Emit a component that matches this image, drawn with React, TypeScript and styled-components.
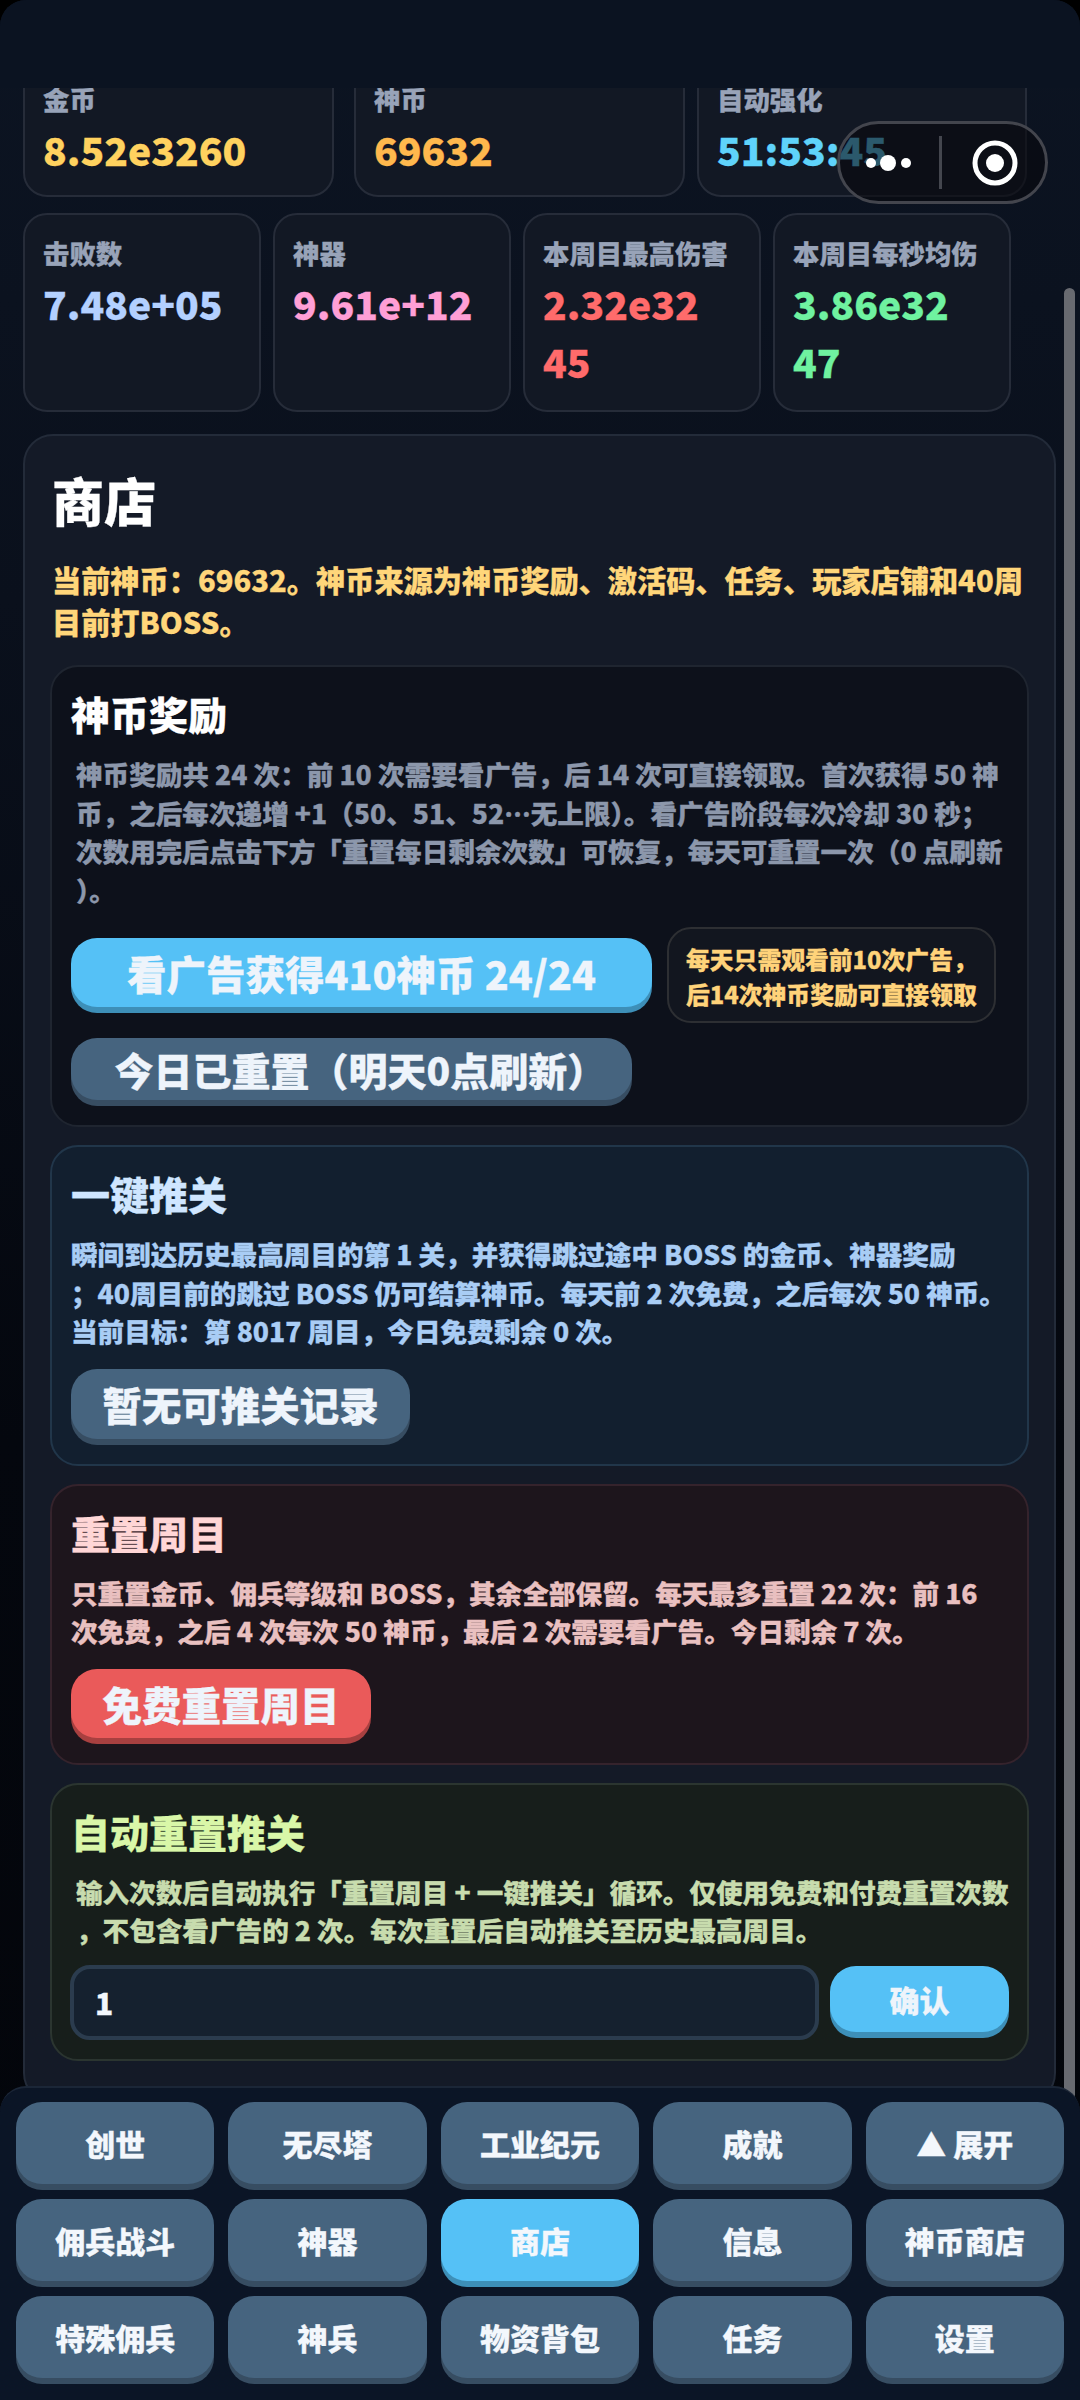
import * as React from 'react'
import styled, { createGlobalStyle } from 'styled-components'

const GlobalStyle = createGlobalStyle`
  html, body {
    margin: 0;
    padding: 0;
    background: #000;
  }
  * {
    box-sizing: border-box;
  }
`

const Screen = styled.div`
  position: relative;
  width: 1080px;
  height: 2400px;
  overflow: hidden;
  display: flex;
  flex-direction: column;
  border-radius: 26px 26px 0 0;
  background: linear-gradient(180deg, #0c1422 0%, #0a101c 25%, #04070e 60%, #03050a 100%);
  font-family: 'Noto Sans CJK SC', 'Noto Sans', sans-serif;
  font-weight: 900;
  -webkit-text-stroke: 0.3px currentColor;
`

const Header = styled.div`
  flex: none;
  position: relative;
  z-index: 2;
  height: 88px;
  background: #0b1321;
`

const Scroller = styled.div`
  flex: 1;
  min-height: 0;
  overflow: hidden;
  padding: 0 24px 0 23px;
`

const TopStats = styled.div`
  display: flex;
  gap: 12px;
  margin-top: -29px;
`

const Stats = styled.div`
  display: grid;
  grid-template-columns: repeat(4, 238px);
  gap: 12px;
  margin-top: 16px;
`

const StatCard = styled.div<{ $width?: number; $gapAfter?: number; $height: number }>`
  flex: none;
  width: ${p => (p.$width ? `${p.$width}px` : 'auto')};
  height: ${p => p.$height}px;
  margin-right: ${p => p.$gapAfter ?? 0}px;
  padding: 19px 18px;
  background: #121824;
  border: 2px solid #262c39;
  border-radius: 24px;
`

const StatLabel = styled.div`
  font-size: 26.4px;
  line-height: 38px;
  color: #98a3b8;
  white-space: nowrap;
`

const StatValue = styled.div<{ $color: string }>`
  margin-top: 2px;
  font-size: 39px;
  line-height: 58px;
  color: ${p => p.$color};
`

const Panel = styled.div`
  margin-top: 22px;
  padding: 28px 25px 40px;
  background: #141a27;
  border: 2px solid #232b39;
  border-radius: 30px;
`

const PanelTitle = styled.h1`
  margin: 0 0 0 2px;
  font-size: 52px;
  font-weight: 900;
  line-height: 72px;
  color: #fff;
`

const CoinLine = styled.div`
  margin: 22px 0 0 2px;
  font-size: 29.2px;
  line-height: 42px;
  color: #ffd67a;
  white-space: nowrap;
`

const Section = styled.div<{ $bg: string; $border: string; $first?: boolean }>`
  margin-top: ${p => (p.$first ? 23 : 18)}px;
  padding: 20px 19px 19px;
  background: ${p => p.$bg};
  border: 2px solid ${p => p.$border};
  border-radius: 28px;
`

const SectionTitle = styled.h2<{ $color: string }>`
  margin: 0;
  font-size: 39px;
  font-weight: 900;
  line-height: 52px;
  color: ${p => p.$color};
`

const Desc = styled.p<{ $color: string; $inset?: boolean }>`
  margin: 16px 0 0;
  padding-left: ${p => (p.$inset ? 5 : 0)}px;
  font-size: 26.6px;
  line-height: 38.5px;
  color: ${p => p.$color};
  white-space: nowrap;
`

const AdRow = styled.div`
  display: flex;
  align-items: center;
  gap: 15px;
  margin-top: 18px;
`

const ActionButton = styled.button<{
  $bg: string
  $shadow: string
  $width: number
  $height: number
  $size: number
  $indent?: number
}>`
  flex: none;
  display: block;
  width: ${p => p.$width}px;
  height: ${p => p.$height - 6}px;
  margin: 0 0 6px;
  padding: 0;
  border: none;
  border-radius: 26px;
  background: ${p => p.$bg};
  box-shadow: 0 6px 0 ${p => p.$shadow};
  color: #eef4fb;
  font-family: inherit;
  font-weight: 900;
  font-size: ${p => p.$size}px;
  text-indent: ${p => p.$indent ?? 0}px;
  white-space: nowrap;
`

const Note = styled.div`
  width: 329px;
  height: 96px;
  padding: 12px 17px;
  background: #12161f;
  border: 2px solid #2d2f33;
  border-radius: 24px;
  font-size: 23.8px;
  line-height: 35px;
  color: #ffd37a;
  white-space: nowrap;
`

const ResetRow = styled.div`
  margin-top: 15px;
`

const ButtonRow = styled.div`
  margin-top: 18px;
`

const InputRow = styled.div`
  display: flex;
  align-items: center;
  gap: 11px;
  margin-top: 15px;
  margin-left: -1px;
`

const CountInput = styled.input`
  flex: none;
  width: 749px;
  height: 75px;
  padding: 0 21px;
  background: #15212f;
  border: 4px solid #2b3c4e;
  border-radius: 20px;
  outline: none;
  color: #f3f7fc;
  font-family: inherit;
  font-weight: 900;
  font-size: 30px;
`

const Nav = styled.div`
  position: absolute;
  left: 0;
  right: 0;
  bottom: 0;
  z-index: 3;
  height: 314px;
  padding: 14px 16px 0;
  display: grid;
  grid-template-columns: repeat(5, 1fr);
  grid-auto-rows: 82px;
  column-gap: 14px;
  row-gap: 15px;
  background: #0b1526;
  border-top: 2px solid #1b2637;
  border-radius: 26px 26px 0 0;
`

const NavButton = styled.button<{ $active?: boolean }>`
  padding: 0;
  border: none;
  border-radius: 26px;
  background: ${p => (p.$active ? '#55c1f6' : '#46647f')};
  box-shadow: 0 6px 0 ${p => (p.$active ? '#3d8fb8' : '#374d62')};
  color: #f3f7fc;
  font-family: inherit;
  font-weight: 900;
  font-size: 30px;
  white-space: nowrap;
`

const ScrollThumb = styled.div`
  position: absolute;
  z-index: 1;
  left: 1064px;
  top: 288px;
  bottom: 300px;
  width: 11px;
  border-radius: 6px;
  background: #686a70;
`

const Capsule = styled.div`
  position: absolute;
  z-index: 4;
  left: 837px;
  top: 121px;
  width: 211px;
  height: 83px;
  display: flex;
  align-items: center;
  padding-left: 24px;
  background: rgba(8, 9, 14, 0.6);
  border: 3px solid #43454d;
  border-radius: 42px;
`

const Divider = styled.div`
  width: 3px;
  height: 53px;
  margin-left: 13px;
  background: #44464e;
`

const CoinLineText = () => (
  <CoinLine>
    当前神币：69632。神币来源为神币奖励、激活码、任务、玩家店铺和40周
    <br />
    目前打BOSS。
  </CoinLine>
)

const navItems = [
  '创世', '无尽塔', '工业纪元', '成就', '▲ 展开',
  '佣兵战斗', '神器', '商店', '信息', '神币商店',
  '特殊佣兵', '神兵', '物资背包', '任务', '设置',
]

const blueBtn = { $bg: '#55c1f6', $shadow: '#3d8fb8' }
const slateBtn = { $bg: '#46647f', $shadow: '#374d62' }

export default function App() {
  return (
    <>
      <GlobalStyle />
      <Screen>
        <Header />
        <Scroller>
          <TopStats>
            <StatCard $width={311} $gapAfter={8} $height={138}>
              <StatLabel>金币</StatLabel>
              <StatValue $color="#ffd25f">8.52e3260</StatValue>
            </StatCard>
            <StatCard $width={331} $height={138}>
              <StatLabel>神币</StatLabel>
              <StatValue $color="#ffb84d">69632</StatValue>
            </StatCard>
            <StatCard $width={330} $height={138}>
              <StatLabel>自动强化</StatLabel>
              <StatValue $color="#5fd3fb">51:53:45</StatValue>
            </StatCard>
          </TopStats>
          <Stats>
            <StatCard $height={199}>
              <StatLabel>击败数</StatLabel>
              <StatValue $color="#b3d0ff">7.48e+05</StatValue>
            </StatCard>
            <StatCard $height={199}>
              <StatLabel>神器</StatLabel>
              <StatValue $color="#ff9fd6">9.61e+12</StatValue>
            </StatCard>
            <StatCard $height={199}>
              <StatLabel>本周目最高伤害</StatLabel>
              <StatValue $color="#ff6b6b">
                2.32e32
                <br />
                45
              </StatValue>
            </StatCard>
            <StatCard $height={199}>
              <StatLabel>本周目每秒均伤</StatLabel>
              <StatValue $color="#6ff2a0">
                3.86e32
                <br />
                47
              </StatValue>
            </StatCard>
          </Stats>
          <Panel>
            <PanelTitle>商店</PanelTitle>
            <CoinLineText />
            <Section $first $bg="#0d111b" $border="#1f2530">
              <SectionTitle $color="#fff">神币奖励</SectionTitle>
              <Desc $color="#8c97ab" $inset>
                神币奖励共 24 次：前 10 次需要看广告，后 14 次可直接领取。首次获得 50 神
                <br />
                币，之后每次递增 +1（50、51、52…无上限）。看广告阶段每次冷却 30 秒；
                <br />
                次数用完后点击下方「重置每日剩余次数」可恢复，每天可重置一次（0 点刷新
                <br />）。
              </Desc>
              <AdRow>
                <ActionButton {...blueBtn} $width={581} $height={75} $size={39.5}>
                  看广告获得410神币 24/24
                </ActionButton>
                <Note>
                  每天只需观看前10次广告，
                  <br />
                  后14次神币奖励可直接领取
                </Note>
              </AdRow>
              <ResetRow>
                <ActionButton {...slateBtn} $width={561} $height={68} $size={39} $indent={18}>
                  今日已重置（明天0点刷新）
                </ActionButton>
              </ResetRow>
            </Section>
            <Section $bg="#121f2f" $border="#21364a">
              <SectionTitle $color="#cfe6ff">一键推关</SectionTitle>
              <Desc $color="#a9cdf5">
                瞬间到达历史最高周目的第 1 关，并获得跳过途中 BOSS 的金币、神器奖励
                <br />；40周目前的跳过 BOSS 仍可结算神币。每天前 2 次免费，之后每次 50 神币。
                <br />
                当前目标：第 8017 周目，今日免费剩余 0 次。
              </Desc>
              <ButtonRow>
                <ActionButton {...slateBtn} $width={339} $height={76} $size={39.5}>
                  暂无可推关记录
                </ActionButton>
              </ButtonRow>
            </Section>
            <Section $bg="#1d151c" $border="#35232c">
              <SectionTitle $color="#ffd6d6">重置周目</SectionTitle>
              <Desc $color="#e9c0c0">
                只重置金币、佣兵等级和 BOSS，其余全部保留。每天最多重置 22 次：前 16
                <br />
                次免费，之后 4 次每次 50 神币，最后 2 次需要看广告。今日剩余 7 次。
              </Desc>
              <ButtonRow>
                <ActionButton $bg="#ea5a5a" $shadow="#a84040" $width={300} $height={75} $size={39.5}>
                  免费重置周目
                </ActionButton>
              </ButtonRow>
            </Section>
            <Section $bg="#171e1b" $border="#2b3530">
              <SectionTitle $color="#d9f7a8">自动重置推关</SectionTitle>
              <Desc $color="#c8dcae" $inset>
                输入次数后自动执行「重置周目 + 一键推关」循环。仅使用免费和付费重置次数
                <br />，不包含看广告的 2 次。每次重置后自动推关至历史最高周目。
              </Desc>
              <InputRow>
                <CountInput defaultValue="1" />
                <ActionButton {...blueBtn} $width={179} $height={72} $size={30}>
                  确认
                </ActionButton>
              </InputRow>
            </Section>
          </Panel>
        </Scroller>
        <ScrollThumb />
        <Capsule>
          <svg width="62" height="24" viewBox="0 0 62 24">
            <circle cx="7" cy="12" r="5" fill="#fff" />
            <circle cx="24" cy="12" r="8" fill="#fff" />
            <circle cx="42" cy="12" r="5" fill="#fff" />
          </svg>
          <Divider />
          <svg width="48" height="48" viewBox="0 0 48 48" style={{ marginLeft: 29 }}>
            <circle cx="24" cy="24" r="20" fill="none" stroke="#fff" strokeWidth="5" />
            <circle cx="24" cy="24" r="9" fill="#fff" />
          </svg>
        </Capsule>
        <Nav>
          {navItems.map(item => (
            <NavButton key={item} $active={item === '商店'}>
              {item}
            </NavButton>
          ))}
        </Nav>
      </Screen>
    </>
  )
}
